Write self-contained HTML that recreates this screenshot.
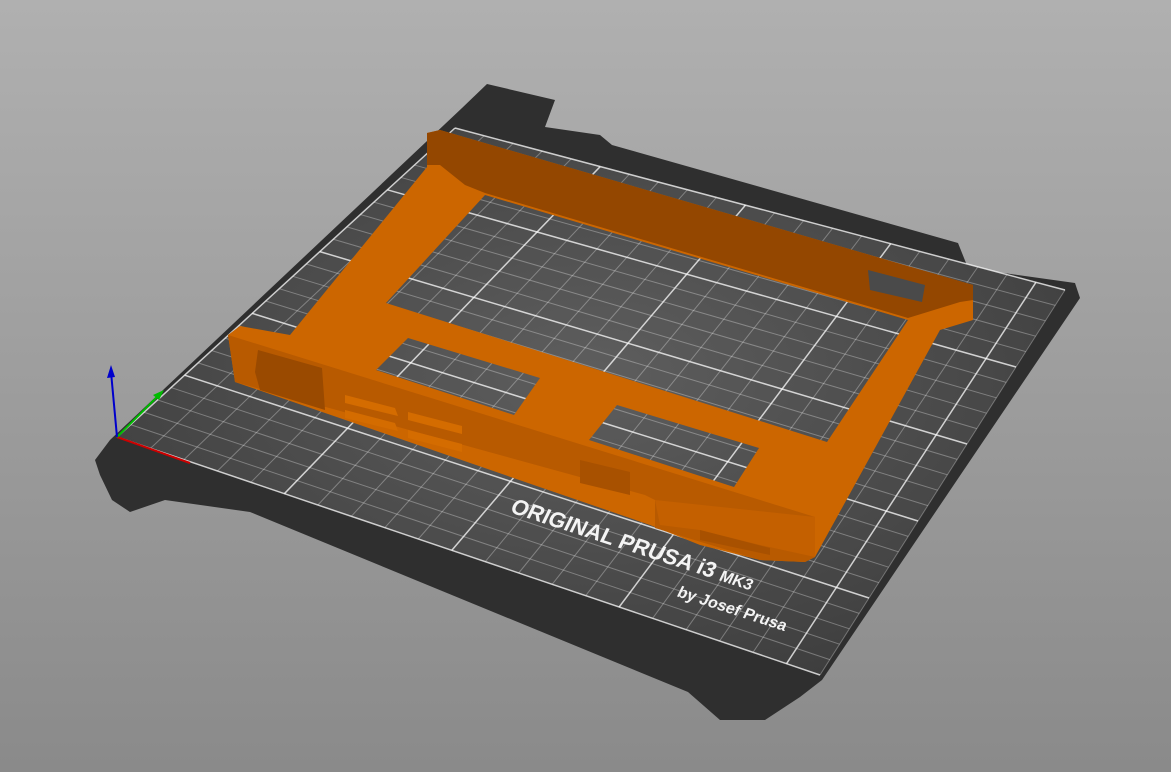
<!DOCTYPE html>
<html><head><meta charset="utf-8"><style>
html,body{margin:0;padding:0;width:1171px;height:772px;overflow:hidden}
body{background:linear-gradient(#b0b0b0,#8a8a8a)}
svg{position:absolute;left:0;top:0}
</style></head><body>
<svg id="s" width="1171" height="772" viewBox="0 0 1171 772">
<defs>
<radialGradient id="bg" cx="0.5" cy="0.45" r="0.6">
<stop offset="0" stop-color="#5e5e5e"/><stop offset="1" stop-color="#3e3e3e"/>
</radialGradient>
</defs>
<polygon fill="#2f2f2f" points="462,108 487,84 555,100 545,127 600,135 612,145 905,228 958,243 968,268 1075,283 1080,298 822,680 800,697 765,720 720,720 688,692 250,512 165,500 130,512 112,500 100,475 95,460 110,440"/>
<polygon fill="url(#bg)" points="117,437 455,128 1065,290 820,675"/>
<g id="grid"></g>
<g>
<line x1="117" y1="437" x2="190" y2="463" stroke="#c00" stroke-width="2"/>
<line x1="117" y1="437" x2="160" y2="394" stroke="#0b0" stroke-width="2"/>
<line x1="117" y1="437" x2="111" y2="372" stroke="#00c" stroke-width="2"/>
<polygon fill="#00c" points="111,365 107,378 115,377"/>
<polygon fill="#0b0" points="164,390 153,395 159,400"/>
</g>
<g font-family="Liberation Sans, sans-serif" font-weight="bold" fill="#f4f4f4">
<text transform="translate(509,512) rotate(18) skewX(-8)" font-size="22">ORIGINAL PRUSA i3 <tspan font-size="16">MK3</tspan></text>
<text transform="translate(676,596) rotate(18) skewX(-8)" font-size="16">by Josef Prusa</text>
</g>
<path fill-rule="evenodd" fill="#cc6600" d="M427,133 L440,130 L973,285 L973,320 L940,330 L815,557 L805,562 L760,560 L700,545 L650,525 L235,382 L228,335 L240,326 L290,335 L427,167 Z
M485,195 L908,320 L827,442 L386,303 Z
M408,338 L540,378 L514,415 L376,370 Z
M617,405 L759,448 L734,487 L589,440 Z"/>
<polygon fill="#944700" points="440,130 973,285 973,300 960,302 908,318 485,193 465,185 440,165 427,165 427,133"/>
<polygon fill="#b85a00" points="228,335 815,517 815,557 805,562 760,560 655,528 655,500 645,495 235,382"/>
<polygon fill="#c46000" points="655,500 815,517 815,557 760,545 700,530 660,525"/>
<polygon fill="#9a4a00" points="258,350 322,368 325,410 260,390 255,372"/>
<polygon fill="#d46c00" points="345,395 395,408 398,416 345,403"/>
<polygon fill="#d46c00" points="345,410 395,423 398,431 345,418"/>
<polygon fill="#d46c00" points="408,412 462,426 462,434 408,420"/>
<polygon fill="#d46c00" points="408,430 462,444 462,452 408,438"/>
<polygon fill="#a85100" points="580,460 630,472 630,495 580,483"/>
<polygon fill="#a85100" points="700,530 770,548 770,555 700,540"/>
<polygon fill="#4a4a4a" points="868,270 925,285 922,302 870,290"/>
</svg>
<script>
var A=[117,437],B=[455,128],C=[1065,290],D=[820,675];
function L(p,q,t){return[p[0]+(q[0]-p[0])*t,p[1]+(q[1]-p[1])*t]}
var g=document.getElementById('grid'),h='';
function ln(p,q,m){h+='<line x1="'+p[0]+'" y1="'+p[1]+'" x2="'+q[0]+'" y2="'+q[1]+'" stroke="rgba(255,255,255,'+(m?0.75:0.3)+')" stroke-width="'+(m?1.5:1)+'"/>'}
for(var i=0;i<=25;i++){var t=i/25;ln(L(A,B,t),L(D,C,t),i%5==0)}
for(var j=0;j<=21;j++){var t=j/21;ln(L(A,D,t),L(B,C,t),j%5==0)}
g.innerHTML=h;
</script>
</body></html>
